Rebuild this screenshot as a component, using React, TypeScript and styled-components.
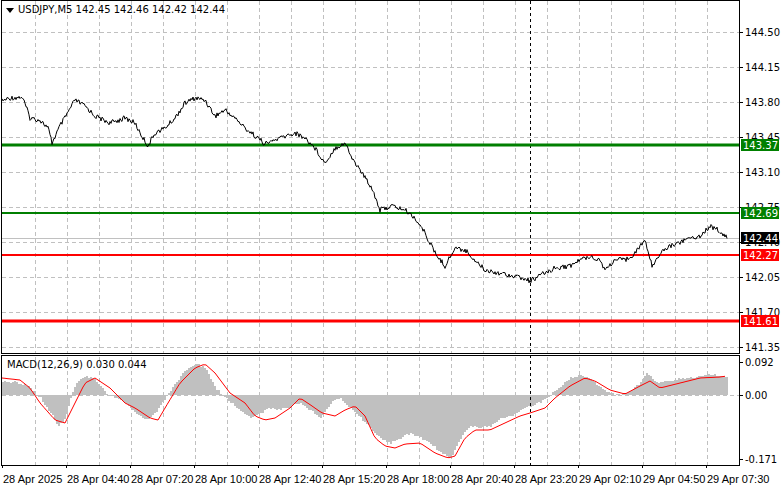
import React from "react";
import styled, { createGlobalStyle } from "styled-components";

const Global = createGlobalStyle`
  html, body { margin: 0; padding: 0; background: #fff; }
  body { font-family: "DejaVu Sans", "Liberation Sans", sans-serif; }
`;

const Page = styled.div`
  width: 781px;
  height: 489px;
  display: flex;
  flex-direction: column;
  background: #fff;
  overflow: hidden;
`;

const Panel = styled.svg<{ $h: number }>`
  display: block;
  width: 781px;
  height: ${(p) => p.$h}px;
  font-family: "DejaVu Sans", sans-serif;
  font-size: 10px;
`;

const TimeAxis = styled.div`
  display: flex;
  padding-left: 3px;
  height: 21px;
  align-items: center;
`;

const TimeLabel = styled.span`
  width: 64px;
  flex: none;
  font-family: "Liberation Sans", Arial, sans-serif;
  font-size: 11px;
  color: #000;
  white-space: nowrap;
`;

type P = [number, number];

function rand(i: number) {
  const s = Math.sin(i * 12.9898) * 43758.5453;
  return s - Math.floor(s);
}

function interp(pts: P[], x: number) {
  for (let i = 0; i < pts.length - 1; i++) {
    const [x0, y0] = pts[i];
    const [x1, y1] = pts[i + 1];
    if (x >= x0 && x <= x1) return y0 + ((y1 - y0) * (x - x0)) / (x1 - x0 || 1);
  }
  return pts[pts.length - 1][1];
}

const pricePts: P[] = [[2,103],[10,100],[22,99],[25,106],[30,120],[40,122],[48,130],[52,145],[60,128],[66,118],[75,102],[85,108],[95,118],[110,125],[125,120],[135,125],[140,135],[148,148],[155,135],[165,130],[175,120],[185,105],[195,100],[205,102],[215,118],[225,112],[235,120],[245,130],[258,140],[265,146],[280,140],[295,135],[305,140],[315,150],[325,165],[335,150],[345,145],[352,160],[362,175],[372,190],[380,212],[392,208],[405,212],[415,220],[425,235],[435,255],[445,268],[455,250],[465,252],[475,262],[485,272],[500,275],[515,278],[530,283],[545,275],[555,270],[570,268],[580,262],[590,258],[600,262],[605,272],[615,262],[625,262],[635,255],[645,242],[652,268],[660,255],[670,248],[680,244],[690,240],[700,238],[710,228],[718,232],[727,240]];

const histPts: P[] = [[2,383],[20,385],[30,390],[40,400],[50,415],[58,428],[65,420],[70,400],[75,385],[85,378],[95,382],[105,395],[115,400],[125,405],[135,415],[145,422],[155,415],[165,400],[175,385],[185,372],[195,366],[205,370],[215,390],[225,400],[235,408],[250,420],[260,415],[270,410],[280,412],[290,408],[300,405],[320,420],[330,405],[340,400],[350,410],[360,420],[370,430],[380,440],[390,445],[400,440],[410,435],[420,440],[430,445],[440,455],[450,460],[460,440],[470,428],[480,430],[490,428],[500,420],[510,418],[520,413],[530,408],[540,404],[550,397],[560,388],[570,380],[580,377],[590,381],[600,390],[610,395],[620,397],[630,393],[640,385],[645,375],[650,378],[655,385],[665,383],[680,381],[700,378],[712,376],[720,378],[727,380]];

const sigPts: P[] = [[2,380],[20,382],[30,390],[40,405],[55,422],[65,425],[75,405],[85,385],[95,380],[110,390],[125,405],[135,410],[150,420],[158,422],[168,405],[180,385],[195,370],[205,366],[215,375],[230,395],[245,405],[255,418],[265,422],[275,420],[290,410],[300,400],[312,408],[322,415],[335,418],[345,412],[355,408],[365,418],[375,440],[385,448],[395,450],[405,446],[420,445],[435,455],[448,460],[455,458],[465,440],[475,432],[490,432],[505,425],[520,418],[530,415],[545,410],[555,400],[570,388],[585,380],[595,383],[610,392],[625,396],[640,388],[650,383],[660,390],[668,388],[680,385],[700,380],[720,379],[727,378]];

const MAIN_TOP = 2;
const MACD_TOP = 357;

function pricePath() {
  let d = "";
  for (let x = 2; x <= 727; x++) {
    const y = interp(pricePts, x) + (rand(x) - 0.5) * 5 - MAIN_TOP;
    d += (x === 2 ? "M" : "L") + x + "," + y.toFixed(1);
  }
  return d;
}

function sigPath() {
  let d = "";
  for (let x = 2; x <= 727; x += 3) {
    const y = interp(sigPts, x) - MACD_TOP;
    d += (x === 2 ? "M" : "L") + x + "," + y.toFixed(1);
  }
  return d;
}

const zeroY = 397 - MACD_TOP;

function histBars() {
  const out: React.ReactNode[] = [];
  for (let x = 2; x <= 727; x += 2) {
    const y = Math.round(interp(histPts, x) + (rand(x + 99) - 0.5) * 2 - MACD_TOP);
    const top = Math.min(y, zeroY);
    out.push(<rect key={x} x={x} y={top} width={2} height={Math.max(1, Math.abs(y - zeroY))} fill="#c0c0c0" shapeRendering="crispEdges" />);
  }
  return out;
}

const gridX = Array.from({ length: 23 }, (_, i) => 35 + i * 32);
const prices = ["144.50","144.15","143.80","143.45","143.10","142.75","142.40","142.05","141.70","141.35"];
const py = (p: number) => 34 + (144.5 - p) * 100 - MAIN_TOP;

const levels: { p: string; c: string; w: number }[] = [
  { p: "143.37", c: "#007f00", w: 3 },
  { p: "142.69", c: "#007f00", w: 2 },
  { p: "142.27", c: "#ff0000", w: 2 },
  { p: "141.61", c: "#ff0000", w: 3 },
];

const times = ["28 Apr 2025","28 Apr 04:40","28 Apr 07:20","28 Apr 10:00","28 Apr 12:40","28 Apr 15:20","28 Apr 18:00","28 Apr 20:40","28 Apr 23:20","29 Apr 02:10","29 Apr 04:50","29 Apr 07:30"];

export default function App() {
  const mainH = 355;
  const macdH = 113;
  return (
    <Page>
      <Global />
      <Panel $h={mainH} viewBox={`0 0 781 ${mainH}`}>
        {gridX.map((x) => (
          <line key={x} x1={x + 0.5} x2={x + 0.5} y1={1} y2={mainH - 1} stroke="#c0c0c0" strokeDasharray="4 3" />
        ))}
        {prices.map((p) => (
          <line key={p} x1={2} x2={739} y1={py(+p) + 0.5} y2={py(+p) + 0.5} stroke="#c0c0c0" strokeDasharray="4 3" />
        ))}
        <line x1={530.5} x2={530.5} y1={1} y2={mainH} stroke="#000" strokeDasharray="3 3" />
        <line x1={2} x2={739} y1={py(142.44) + 0.5} y2={py(142.44) + 0.5} stroke="#c0c0c0" />
        {levels.map((l) => (
          <line key={l.p} x1={2} x2={740} y1={py(+l.p)} y2={py(+l.p)} stroke={l.c} strokeWidth={l.w} />
        ))}
        <path d={pricePath()} fill="none" stroke="#000" strokeWidth={1} />
        <rect x={1.5} y={0.5} width={738} height={mainH - 2} fill="none" stroke="#000" />
        {prices.map((p) => (
          <g key={p}>
            <line x1={740} x2={743} y1={py(+p) + 0.5} y2={py(+p) + 0.5} stroke="#000" />
            <text x={745} y={py(+p) + 4} fill="#000">{p}</text>
          </g>
        ))}
        {levels.map((l) => (
          <g key={l.p}>
            <rect x={741} y={py(+l.p) - 6} width={38} height={12} fill={l.c === "#ff0000" ? "#ff0000" : "#008000"} />
            <text x={743} y={py(+l.p) + 4} fill="#fff">{l.p}</text>
          </g>
        ))}
        <rect x={741} y={py(142.44) - 6} width={38} height={12} fill="#000" />
        <text x={743} y={py(142.44) + 4} fill="#fff">142.44</text>
        <path d="M6,8 L14,8 L10,13 Z" fill="#000" />
        <text x={18} y={13} fill="#000">USDJPY,M5  142.45 142.46 142.42 142.44</text>
      </Panel>
      <Panel $h={macdH} viewBox={`0 0 781 ${macdH}`}>
        {gridX.map((x) => (
          <line key={x} x1={x + 0.5} x2={x + 0.5} y1={2} y2={110} stroke="#c0c0c0" strokeDasharray="4 3" />
        ))}
        {histBars()}
        <line x1={2} x2={739} y1={zeroY + 0.5} y2={zeroY + 0.5} stroke="#c0c0c0" strokeDasharray="4 3" />
        <line x1={530.5} x2={530.5} y1={0} y2={110} stroke="#000" strokeDasharray="3 3" />
        <path d={sigPath()} fill="none" stroke="#ff0000" strokeWidth={1} />
        <rect x={1.5} y={0.5} width={738} height={110} fill="none" stroke="#000" />
        {[2, 66, 130, 194, 258, 322, 386, 450, 514, 578, 642, 706].map((x) => (
          <line key={x} x1={x + 0.5} x2={x + 0.5} y1={111} y2={113} stroke="#000" />
        ))}
        <text x={7} y={13} fill="#000">MACD(12,26,9) 0.030 0.044</text>
        <text x={745} y={11} fill="#000">0.092</text>
        <text x={745} y={zeroY + 4} fill="#000">0.00</text>
        <text x={745} y={108} fill="#000">-0.171</text>
        {[7, zeroY, 104].map((y) => (
          <line key={y} x1={740} x2={743} y1={y + 0.5} y2={y + 0.5} stroke="#000" />
        ))}
      </Panel>
      <TimeAxis>
        {times.map((t) => (
          <TimeLabel key={t}>{t}</TimeLabel>
        ))}
      </TimeAxis>
    </Page>
  );
}
